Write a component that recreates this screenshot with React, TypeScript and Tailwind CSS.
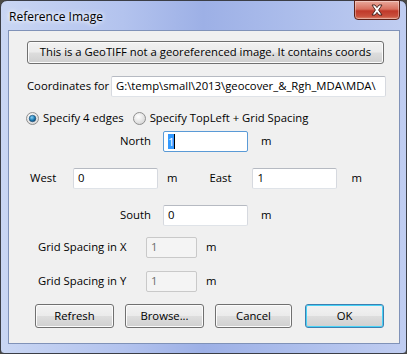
import React from "react";

const font = { fontFamily: '"Segoe UI", "Open Sans", "Noto Sans", sans-serif' };

function Radio({ checked }: { checked?: boolean }) {
  return (
    <svg width="13" height="13" viewBox="0 0 13 13" className="shrink-0">
      <defs>
        <radialGradient id="rg-bg" cx="40%" cy="35%" r="70%">
          <stop offset="0%" stopColor="#ffffff" />
          <stop offset="100%" stopColor="#d4d4d4" />
        </radialGradient>
        <radialGradient id="rg-dot" cx="40%" cy="35%" r="70%">
          <stop offset="0%" stopColor="#8ad1f5" />
          <stop offset="60%" stopColor="#1a7ab3" />
          <stop offset="100%" stopColor="#0b3d66" />
        </radialGradient>
      </defs>
      <circle cx="6.5" cy="6.5" r="6" fill="url(#rg-bg)" stroke="#8f8f8f" strokeWidth="1" />
      {checked && <circle cx="6.5" cy="6.5" r="3.3" fill="url(#rg-dot)" stroke="#1f4e74" strokeWidth="0.6" />}
    </svg>
  );
}

function WinButton({ label, width, primary }: { label: string; width: string; primary?: boolean }) {
  return (
    <div
      className={`${width} h-[24px] rounded-[3px] border flex items-center justify-center text-[11.3px] text-black bg-[linear-gradient(#f2f2f2_0%,#ebebeb_48%,#dddddd_52%,#cfcfcf_100%)] ${
        primary ? "border-[#3c7fb1] shadow-[inset_0_0_0_1px_#48d2f6]" : "border-[#707070] shadow-[inset_0_0_0_1px_#fbfbfb]"
      }`}
    >
      {label}
    </div>
  );
}

function TextBox({ value, width, disabled, focused }: { value: string; width: string; disabled?: boolean; focused?: boolean }) {
  return (
    <div
      className={`${width} h-[21px] shrink-0 rounded-[2px] border flex items-center pl-[4px] overflow-hidden whitespace-nowrap text-[11.3px] ${
        disabled
          ? "bg-[#f4f4f4] border-[#c9c9c9] text-[#6d6d6d]"
          : focused
          ? "bg-white border-[#5a9ad6] text-black"
          : "bg-white border-[#b6bac2] border-b-[#dfe3e8] border-l-[#d6d9df] border-r-[#d6d9df] text-black"
      }`}
    >
      {focused ? (
        <span className="flex items-center">
          <span className="bg-[#3399ff] text-white leading-[15px]">{value}</span>
          <span className="w-[1px] h-[15px] bg-black" />
        </span>
      ) : (
        value
      )}
    </div>
  );
}

export default function App() {
  return (
    <div className="w-[407px] h-[354px] bg-[#4b4a45]" style={font}>
      <div className="w-[407px] h-[354px] rounded-t-[7px] rounded-b-[4px] border border-[#3b3e46] bg-[linear-gradient(90deg,#c9d6f3_0%,#b3c3ee_30%,#9db0e6_50%,#aebfec_75%,#c0cdf1_100%)] flex flex-col">
        <div className="h-[29px] flex items-start shrink-0">
          <div className="ml-[8px] mt-[7px] text-[12px] text-black [text-shadow:0_0_6px_#ffffff,0_0_4px_#ffffff]">
            Reference Image
          </div>
          <div className="ml-auto mr-[6px] w-[46px] h-[20px] -mt-[1px] rounded-b-[4px] border border-[#5c2117] bg-[linear-gradient(#e9a99c_0%,#d8705f_45%,#c0392a_55%,#c9503d_85%,#e08a72_100%)] flex items-center justify-center shadow-[inset_0_0_0_1px_rgba(255,255,255,0.35)]">
            <svg width="14" height="12" viewBox="0 0 14 12">
              <path
                d="M2 1 L5 1 L7 3.6 L9 1 L12 1 L8.6 6 L12 11 L9 11 L7 8.4 L5 11 L2 11 L5.4 6 Z"
                fill="#ffffff"
                stroke="#3b1a14"
                strokeWidth="0.9"
                strokeLinejoin="round"
              />
            </svg>
          </div>
        </div>
        <div className="ml-[7px] mr-[6px] h-[314px] border border-[#8092b8] bg-[#f0f0f0] flex flex-col text-[11.3px] text-black shrink-0 whitespace-nowrap">
          <div className="ml-[18px] mt-[10px]">
            <div className="w-[357px] h-[23px] rounded-[3px] border border-[#707070] shadow-[inset_0_0_0_1px_#fbfbfb] bg-[linear-gradient(#f2f2f2_0%,#ebebeb_48%,#dddddd_52%,#cfcfcf_100%)] flex items-center justify-center">
              This is a GeoTIFF not a georeferenced image. It contains coords
            </div>
          </div>

          <div className="flex items-center ml-[18px] mt-[12px] h-[21px]">
            <span className="w-[84px] shrink-0">Coordinates for</span>
            <TextBox value="G:\temp\small\2013\geocover_&_Rgh_MDA\MDA\" width="w-[275px]" />
          </div>

          <div className="flex items-center ml-[17px] mt-[11px] h-[20px]">
            <Radio checked />
            <span className="ml-[4px]">Specify 4 edges</span>
            <span className="ml-[9px] flex">
              <Radio />
            </span>
            <span className="ml-[4px]">Specify TopLeft + Grid Spacing</span>
          </div>

          <div className="flex items-center ml-[111px] mt-[3px] h-[21px]">
            <span className="w-[43px]">North</span>
            <TextBox value="1" width="w-[85px]" focused />
            <span className="ml-[13px]">m</span>
          </div>

          <div className="flex items-center ml-[21px] mt-[16px] h-[21px]">
            <span className="w-[43px]">West</span>
            <TextBox value="0" width="w-[85px]" />
            <span className="ml-[9px]">m</span>
            <span className="ml-[32px] w-[43px]">East</span>
            <TextBox value="1" width="w-[85px]" />
            <span className="ml-[14px]">m</span>
          </div>

          <div className="flex items-center ml-[111px] mt-[16px] h-[21px]">
            <span className="w-[43px]">South</span>
            <TextBox value="0" width="w-[85px]" />
            <span className="ml-[13px]">m</span>
          </div>

          <div className="flex items-center ml-[29px] mt-[11px] h-[21px]">
            <span className="w-[108px]">Grid Spacing in X</span>
            <TextBox value="1" width="w-[51px]" disabled />
            <span className="ml-[9px]">m</span>
          </div>

          <div className="flex items-center ml-[29px] mt-[13px] h-[21px]">
            <span className="w-[108px]">Grid Spacing in Y</span>
            <TextBox value="1" width="w-[51px]" disabled />
            <span className="ml-[9px]">m</span>
          </div>

          <div className="flex items-center ml-[26px] mt-[12px] gap-[11px]">
            <WinButton label="Refresh" width="w-[79px]" />
            <WinButton label="Browse..." width="w-[79px]" />
            <WinButton label="Cancel" width="w-[77px]" />
            <span className="ml-[2px]">
              <WinButton label="OK" width="w-[79px]" primary />
            </span>
          </div>
        </div>
      </div>
    </div>
  );
}
